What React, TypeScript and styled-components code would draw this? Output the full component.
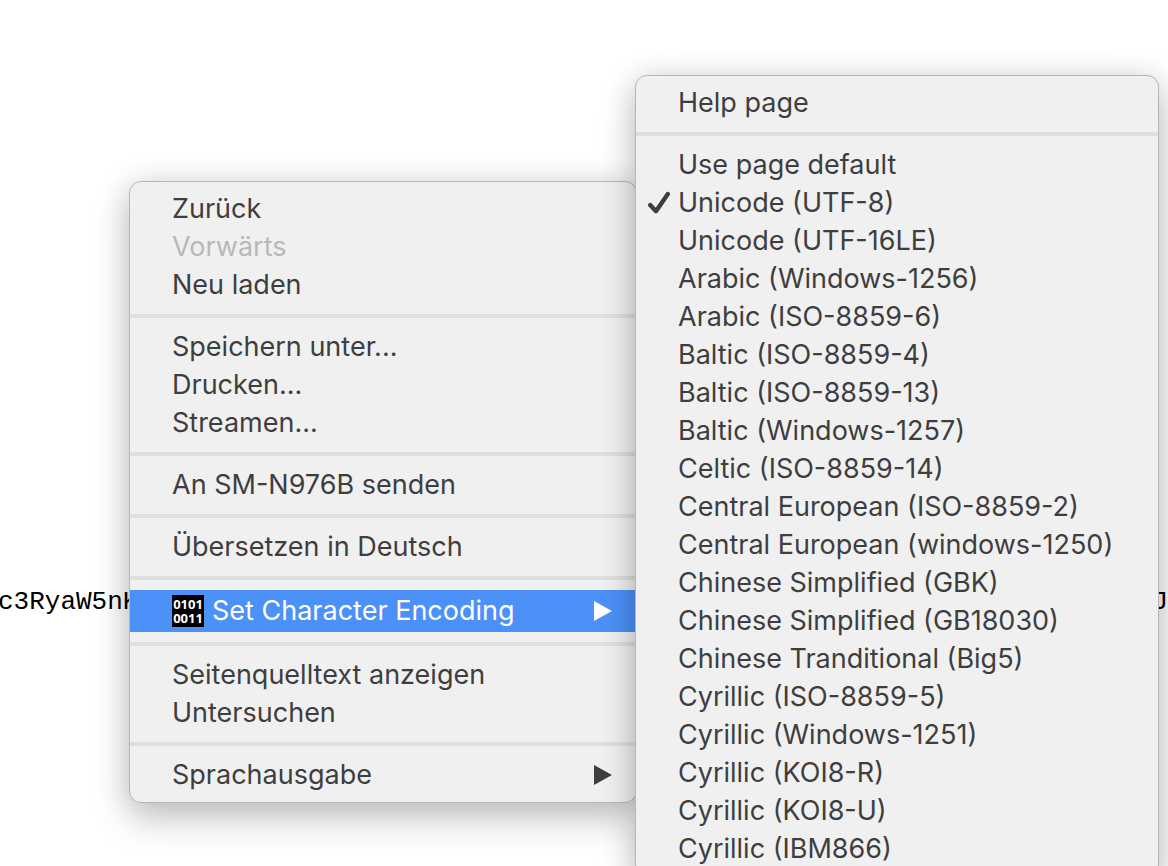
import React from "react";
import styled, { createGlobalStyle, css } from "styled-components";

const GlobalStyle = createGlobalStyle`
  *, *::before, *::after { box-sizing: border-box; }
  body { margin: 0; background: #fff; }
`;

const Page = styled.main`
  position: relative;
  height: 100vh;
  overflow: hidden;
  background: #fff;
`;

const SourceLine = styled.p`
  display: flex;
  justify-content: space-between;
  margin: 0 0 0 -2px;
  padding-top: 586px;
  font: 26px/32px "Liberation Mono", monospace;
  color: #000;
`;

const MenuLayer = styled.div`
  position: absolute;
  inset: 0;
  display: flex;
  align-items: flex-start;
  padding: 75px 9px 0 129px;
`;

const Menu = styled.div<{ $sub?: boolean }>`
  position: relative;
  display: flex;
  flex-direction: column;
  padding: 8px 0;
  border: 1px solid #b6b6b6;
  border-radius: 12px;
  background: #f0f0f0;
  box-shadow: 0 16px 36px rgba(0, 0, 0, 0.22), 0 0 30px rgba(0, 0, 0, 0.11);
  font-family: Inter, sans-serif;

  ${({ $sub }) =>
    $sub
      ? css`
          flex: 1;
          min-width: 500px;
          margin-left: -2px;
        `
      : css`
          flex: 0 0 508px;
          margin-top: 106px;
        `}
`;

const Item = styled.button<{ $selected?: boolean }>`
  display: flex;
  align-items: center;
  width: 100%;
  height: ${({ $selected }) => ($selected ? 42 : 38)}px;
  padding: 0 24px 0 0;
  border: 0;
  background: ${({ $selected }) => ($selected ? "#4c91f8" : "transparent")};
  color: ${({ $selected }) => ($selected ? "#fff" : "#3e3e3e")};
  font: inherit;
  font-size: 27px;
  line-height: 36px;
  text-align: left;
  white-space: nowrap;

  &:disabled {
    color: #b8b8b8;
  }
`;

const Gutter = styled.span`
  display: flex;
  flex: 0 0 42px;
  justify-content: center;
  padding-left: 4px;
`;

const Label = styled.span`
  flex: 1;
`;

const Separator = styled.hr`
  width: 100%;
  height: 4px;
  margin: 10px 0;
  border: 0;
  background: #dfdfdf;
`;

const BinaryIcon = styled.span`
  width: 32px;
  height: 32px;
  margin-right: 8px;
  padding: 2px 0;
  background: #000;
  color: #fff;
  font: bold 13px/14px "Open Sans", sans-serif;
  text-align: center;
  white-space: normal;
`;

const Arrow = () => (
  <svg width="18" height="20" viewBox="0 0 18 20" aria-hidden="true">
    <path d="M0 0 18 10 0 20Z" fill="currentColor" />
  </svg>
);

const Check = () => (
  <svg width="22" height="24" viewBox="0 0 22 24" aria-hidden="true">
    <path
      d="M2.2 14 8 20.2 19.8 3"
      fill="none"
      stroke="currentColor"
      strokeWidth="4.4"
      strokeLinecap="round"
      strokeLinejoin="round"
    />
  </svg>
);

type Entry = {
  label: string;
  disabled?: boolean;
  selected?: boolean;
  checked?: boolean;
  submenu?: boolean;
};

const contextGroups: Entry[][] = [
  [{ label: "Zurück" }, { label: "Vorwärts", disabled: true }, { label: "Neu laden" }],
  [{ label: "Speichern unter..." }, { label: "Drucken..." }, { label: "Streamen..." }],
  [{ label: "An SM-N976B senden" }],
  [{ label: "Übersetzen in Deutsch" }],
  [{ label: "Set Character Encoding", selected: true, submenu: true }],
  [{ label: "Seitenquelltext anzeigen" }, { label: "Untersuchen" }],
  [{ label: "Sprachausgabe", submenu: true }],
];

const encodingGroups: Entry[][] = [
  [{ label: "Help page" }],
  [
    { label: "Use page default" },
    { label: "Unicode (UTF-8)", checked: true },
    { label: "Unicode (UTF-16LE)" },
    { label: "Arabic (Windows-1256)" },
    { label: "Arabic (ISO-8859-6)" },
    { label: "Baltic (ISO-8859-4)" },
    { label: "Baltic (ISO-8859-13)" },
    { label: "Baltic (Windows-1257)" },
    { label: "Celtic (ISO-8859-14)" },
    { label: "Central European (ISO-8859-2)" },
    { label: "Central European (windows-1250)" },
    { label: "Chinese Simplified (GBK)" },
    { label: "Chinese Simplified (GB18030)" },
    { label: "Chinese Tranditional (Big5)" },
    { label: "Cyrillic (ISO-8859-5)" },
    { label: "Cyrillic (Windows-1251)" },
    { label: "Cyrillic (KOI8-R)" },
    { label: "Cyrillic (KOI8-U)" },
    { label: "Cyrillic (IBM866)" },
  ],
];

const MenuGroups = ({ groups }: { groups: Entry[][] }) => (
  <>
    {groups.map((group, index) => (
      <React.Fragment key={group[0].label}>
        {index > 0 && <Separator />}
        {group.map((entry) => (
          <Item
            key={entry.label}
            type="button"
            role="menuitem"
            disabled={entry.disabled}
            $selected={entry.selected}
            aria-haspopup={entry.submenu ? "menu" : undefined}
          >
            <Gutter>{entry.checked && <Check />}</Gutter>
            {entry.selected && <BinaryIcon aria-hidden="true">0101 0011</BinaryIcon>}
            <Label>{entry.label}</Label>
            {entry.submenu && <Arrow />}
          </Item>
        ))}
      </React.Fragment>
    ))}
  </>
);

export default function App() {
  return (
    <>
      <GlobalStyle />
      <Page>
        <SourceLine>
          <span>c3RyaW5nK</span>
          <span>J</span>
        </SourceLine>
        <MenuLayer>
          <Menu role="menu" aria-label="Kontextmenü">
            <MenuGroups groups={contextGroups} />
          </Menu>
          <Menu $sub role="menu" aria-label="Set Character Encoding">
            <MenuGroups groups={encodingGroups} />
          </Menu>
        </MenuLayer>
      </Page>
    </>
  );
}
